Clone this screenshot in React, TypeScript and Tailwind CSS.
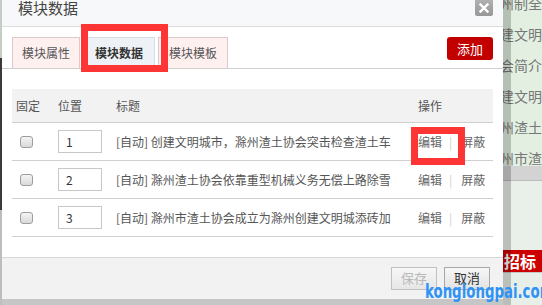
import React from 'react'

const CJK = { fontFamily: '"Noto Sans CJK SC", "Noto Sans", sans-serif' }

const ROWS = [
  { pos: '1', title: '[自动] 创建文明城市，滁州渣土协会突击检查渣土车' },
  { pos: '2', title: '[自动] 滁州渣土协会依靠重型机械义务无偿上路除雪' },
  { pos: '3', title: '[自动] 滁州市渣土协会成立为滁州创建文明城添砖加' },
]

const SIDE_LINES = ['州制全', '建文明', '会简介', '建文明', '州渣土', '州市渣']

function Checkbox() {
  return <div className="w-[13px] h-[12px] rounded-[3px] border border-[#9d9d9d] bg-gradient-to-b from-[#f4f4f4] to-[#d9d9d9]" />
}

function Modal() {
  return (
    <div className="h-[299px] bg-white flex flex-col">
      <div className="h-[27px] shrink-0 bg-[#f7f8fa] border-b border-[#dcdcdc] flex justify-between">
        <div className="pl-[16px] text-[15px] leading-[22px] text-[#444] -mt-[3px]">模块数据</div>
        <button className="mr-[10px] w-[18px] h-[16px] bg-gradient-to-b from-[#b0b0b0] to-[#979797] rounded-b-[2px] flex items-center justify-center">
          <svg width="10" height="10" viewBox="0 0 10 10">
            <path d="M1.5 1.5 L8.5 8.5 M8.5 1.5 L1.5 8.5" stroke="#fff" strokeWidth="2.4" strokeLinecap="square" />
          </svg>
        </button>
      </div>

      <div className="h-[42px] shrink-0 border-b border-[#cfcfcf] pt-[10px] pl-[10px] pr-[10px] flex items-start">
        <div className="w-[68px] h-[31px] border border-b-0 border-[#dccaca] bg-[#fff0f0] text-[12px] text-[#555] flex items-center justify-center">模块属性</div>
        <div className="ml-[3px] w-[72px] h-[31px] border border-b-0 border-[#d6dde4] bg-[#eef2f6] text-[12px] font-bold text-[#333] flex items-center justify-center">模块数据</div>
        <div className="ml-[3px] w-[70px] h-[31px] border border-b-0 border-[#dccaca] bg-[#fff0f0] text-[12px] text-[#555] flex items-center justify-center">模块模板</div>
        <button className="ml-auto w-[46px] h-[23px] rounded-[3px] bg-[#c20000] text-white text-[13px] flex items-center justify-center">添加</button>
      </div>

      <div className="pt-[20px] px-[10px] text-[12px] text-[#555]">
        <div className="h-[34px] bg-[#f2f2f2] border-b border-[#cfcfcf] flex items-center">
          <div className="w-[46px] pl-[4px]">固定</div>
          <div className="w-[58px]">位置</div>
          <div className="w-[302px]">标题</div>
          <div>操作</div>
        </div>
        {ROWS.map((r) => (
          <div key={r.pos} className="h-[38px] border-b border-[#cfcfcf] flex items-center">
            <div className="w-[46px] pl-[8px]">
              <Checkbox />
            </div>
            <div className="w-[58px]">
              <div className="w-[44px] h-[23px] border border-[#c8c8c8] pl-[7px] flex items-center text-[#333]">{r.pos}</div>
            </div>
            <div className="w-[302px] whitespace-nowrap overflow-hidden">{r.title}</div>
            <div className="flex items-center text-[#666] whitespace-nowrap">
              <span>编辑</span>
              <span className="ml-[7px] text-[#d0d0d0]">|</span>
              <span className="ml-[9px]">屏蔽</span>
            </div>
          </div>
        ))}
      </div>

      <div className="flex-1" />

      <div className="h-[42px] shrink-0 bg-[#f2f2f2] border-t border-[#d6d6d6] flex items-center justify-end gap-[7px] pr-[13px] pb-[1px]">
        <button className="w-[46px] h-[23px] border border-[#c0c0c0] bg-gradient-to-b from-[#f7f7f7] to-[#e6e6e6] text-[13px] text-[#b8b8b8]">保存</button>
        <button className="w-[46px] h-[23px] border border-[#a8a8a8] bg-gradient-to-b from-[#f7f7f7] to-[#e2e2e2] text-[13px] text-[#333]">取消</button>
      </div>
    </div>
  )
}

export default function App() {
  return (
    <div className="w-[542px] h-[305px] relative overflow-hidden flex bg-[#cfcfcf]" style={CJK}>
      <div className="w-[2px] flex flex-col">
        <div className="h-[58px] bg-[#c4cec4]" />
        <div className="h-[152px] bg-[#3a3a3a]" />
        <div className="flex-1 bg-[#bdbdbd]" />
      </div>

      <div className="w-[510px] flex flex-col">
        <Modal />
        <div className="flex-1 bg-[#c6c6c6]" />
      </div>

      <div className="flex-1 relative flex flex-col">
        <div className="h-[166px] bg-[#e3f0e1] overflow-hidden">
          <div className="-mt-[12px] -ml-[3px] text-[14px] leading-[31px] text-[#777] whitespace-nowrap">
            {SIDE_LINES.map((t, i) => (
              <div key={i}>{t}</div>
            ))}
          </div>
        </div>
        <div className="h-[15px] bg-[#d3d3d3] border-b border-[#bcbcbc]" />
        <div className="h-[69px] bg-[#e9efe9]" />
        <div className="h-[22px] bg-[#cc0000] text-white text-[16px] font-bold leading-[22px] whitespace-nowrap pl-[1px] overflow-hidden">招标</div>
        <div className="flex-1 bg-[#e8efe8] border-t border-[#c8c8c8]" />
        <div className="absolute left-0 top-0 bottom-0 w-[8px] bg-black/20" />
      </div>

      <div className="absolute left-[81px] top-[24px] w-[87px] h-[48px] border-[7px] border-[#fd3535]" />
      <div className="absolute left-[411px] top-[127px] w-[54px] h-[38px] border-[7px] border-[#fd3535]" />

      <div
        className="absolute left-[425px] top-[280px] text-[19px] font-bold text-[#2f93f5] leading-[22px] whitespace-nowrap origin-left scale-x-[0.78]"
        style={{ fontFamily: '"DejaVu Sans Condensed", "DejaVu Sans", sans-serif' }}
      >
        konglongpai.com
      </div>
    </div>
  )
}
